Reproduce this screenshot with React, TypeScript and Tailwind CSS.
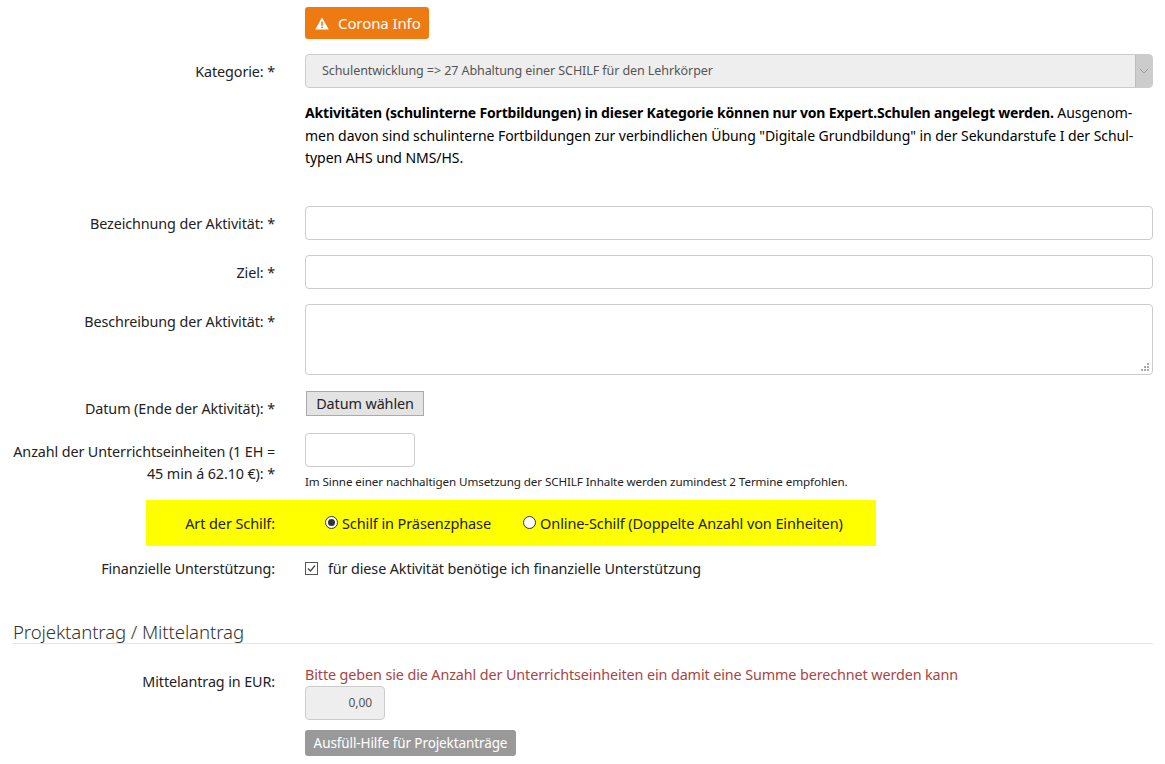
import React from "react";

const input = "block bg-white border border-[#cccccc] rounded-[4px]";

function Label({ children, className = "" }: { children: React.ReactNode; className?: string }) {
  return <div className={"w-[262px] shrink-0 text-right text-[14.35px] text-[#222222] " + className}>{children}</div>;
}

export default function App() {
  return (
    <div className="w-[1165px] h-[764px] overflow-hidden bg-white pl-[13px] pr-[12px] pt-[7px] text-[14px] leading-[22px] text-[#222222] font-['Noto_Sans','Liberation_Sans',sans-serif] tracking-[-0.1px]">
      <div className="pl-[292px]">
        <button className="h-[32px] w-[124px] rounded-[3px] bg-[#ee7a12] text-white text-[15px] flex items-center pl-[10px] gap-[9px]">
          <svg width="14" height="13" viewBox="0 0 14 13"><path d="M7 0.5 L13.8 12.5 H0.2 Z" fill="#fff" /><rect x="6.2" y="4.5" width="1.6" height="4.2" fill="#ee7a12" /><rect x="6.2" y="9.5" width="1.6" height="1.6" fill="#ee7a12" /></svg>
          Corona Info
        </button>
      </div>

      <div className="flex gap-[30px] mt-[15px]">
        <Label className="pt-[7px]">Kategorie: *</Label>
        <div className="flex-1 min-w-0">
          <div className="h-[34px] flex rounded-[4px] border border-[#cccccc] bg-[#eeeeee] overflow-hidden">
            <div className="flex-1 pl-[16px] text-[12.55px] leading-[32px] text-[#555555]">Schulentwicklung =&gt; 27 Abhaltung einer SCHILF für den Lehrkörper</div>
            <div className="w-[17px] bg-[#cccccc] border-l border-[#bbbbbb] flex items-center justify-center">
              <svg width="10" height="6" viewBox="0 0 10 6"><path d="M1 1 L5 5 L9 1" fill="none" stroke="#999" strokeWidth="1" /></svg>
            </div>
          </div>
          <p className="mt-[14px] text-black leading-[22.5px] tracking-[-0.05px]">
            <b className="tracking-[-0.17px]">Aktivitäten (schulinterne Fortbildungen) in dieser Kategorie können nur von Expert.Schulen angelegt werden.</b> Ausgenom-<br />
            men davon sind schulinterne Fortbildungen zur verbindlichen Übung "Digitale Grundbildung" in der Sekundarstufe I der Schul-<br />
            typen AHS und NMS/HS.
          </p>
        </div>
      </div>

      <div className="flex gap-[30px] mt-[36px]">
        <Label className="pt-[7px]">Bezeichnung der Aktivität: *</Label>
        <div className="flex-1"><div className={input + " w-full h-[34px]"} /></div>
      </div>
      <div className="flex gap-[30px] mt-[15px]">
        <Label className="pt-[7px]">Ziel: *</Label>
        <div className="flex-1"><div className={input + " w-full h-[34px]"} /></div>
      </div>
      <div className="flex gap-[30px] mt-[15px]">
        <Label className="pt-[7px]">Beschreibung der Aktivität: *</Label>
        <div className="flex-1">
          <div className={input + " w-full h-[71px] relative"}>
            <svg className="absolute right-[2px] bottom-[2px]" width="9" height="9" viewBox="0 0 9 9" fill="#aaa">
              <rect x="6" y="0" width="2" height="2" /><rect x="3" y="3" width="2" height="2" /><rect x="6" y="3" width="2" height="2" /><rect x="0" y="6" width="2" height="2" /><rect x="3" y="6" width="2" height="2" /><rect x="6" y="6" width="2" height="2" />
            </svg>
          </div>
        </div>
      </div>
      <div className="flex gap-[30px] mt-[16px]">
        <Label className="pt-[7px]">Datum (Ende der Aktivität): *</Label>
        <div className="flex-1">
          <button className="block ml-[1px] h-[25px] w-[118px] bg-[#e3e3e3] border border-[#aaaaaa] text-[#222222] text-[14.4px] leading-[23px]">Datum wählen</button>
        </div>
      </div>
      <div className="flex gap-[30px] mt-[14px]">
        <Label className="pt-[7px]">Anzahl der Unterrichtseinheiten (1 EH =<br />45 min á 62.10 €): *</Label>
        <div className="flex-1 -mt-[1px]">
          <div className={input + " h-[34px] w-[110px]"} />
          <div className="mt-[5px] text-[11.65px] leading-[20px] text-[#222222]">Im Sinne einer nachhaltigen Umsetzung der SCHILF Inhalte werden zumindest 2 Termine empfohlen.</div>
        </div>
      </div>

      <div className="mt-[8px] ml-[133px] w-[730px] h-[46px] bg-[#ffff00] flex items-center text-[14.5px]">
        <div className="w-[129px] text-right">Art der Schilf:</div>
        <label className="ml-[50px] flex items-center gap-[4px]">
          <span className="w-[13px] h-[13px] rounded-full border border-[#333333] flex items-center justify-center bg-white"><span className="w-[7px] h-[7px] rounded-full bg-[#333333]" /></span>
          Schilf in Präsenzphase
        </label>
        <label className="ml-[32px] flex items-center gap-[4px]">
          <span className="w-[13px] h-[13px] rounded-full border border-[#333333] bg-white" />
          Online-Schilf (Doppelte Anzahl von Einheiten)
        </label>
      </div>

      <div className="flex gap-[30px] mt-[12px]">
        <Label>Finanzielle Unterstützung:</Label>
        <label className="flex items-center gap-[10px] text-[14.35px]">
          <svg width="13" height="13" viewBox="0 0 13 13"><rect x="0.5" y="0.5" width="12" height="12" fill="#fff" stroke="#555" /><path d="M3 6.5 L5.5 9 L10 3.5" fill="none" stroke="#444" strokeWidth="1.2" /></svg>
          für diese Aktivität benötige ich finanzielle Unterstützung
        </label>
      </div>

      <h2 className="mt-[39px] h-[25px] border-b border-[#e5e5e5] text-[18.6px] font-light leading-[26px] text-[#333333]">Projektantrag / Mittelantrag</h2>

      <div className="flex gap-[30px] mt-[20px]">
        <Label className="pt-[7px]">Mittelantrag in EUR:</Label>
        <div className="flex-1">
          <div className="text-[#a94442] text-[14.35px]">Bitte geben sie die Anzahl der Unterrichtseinheiten ein damit eine Summe berechnet werden kann</div>
          <div className="w-[80px] h-[34px] rounded-[4px] border border-[#cccccc] bg-[#eeeeee] text-right pr-[12px] text-[12px] leading-[32px] text-[#555555]">0,00</div>
          <button className="block mt-[10px] h-[26px] w-[211px] rounded-[3px] bg-[#999999] text-white text-[13.5px] leading-[26px]">Ausfüll-Hilfe für Projektanträge</button>
        </div>
      </div>
    </div>
  );
}
